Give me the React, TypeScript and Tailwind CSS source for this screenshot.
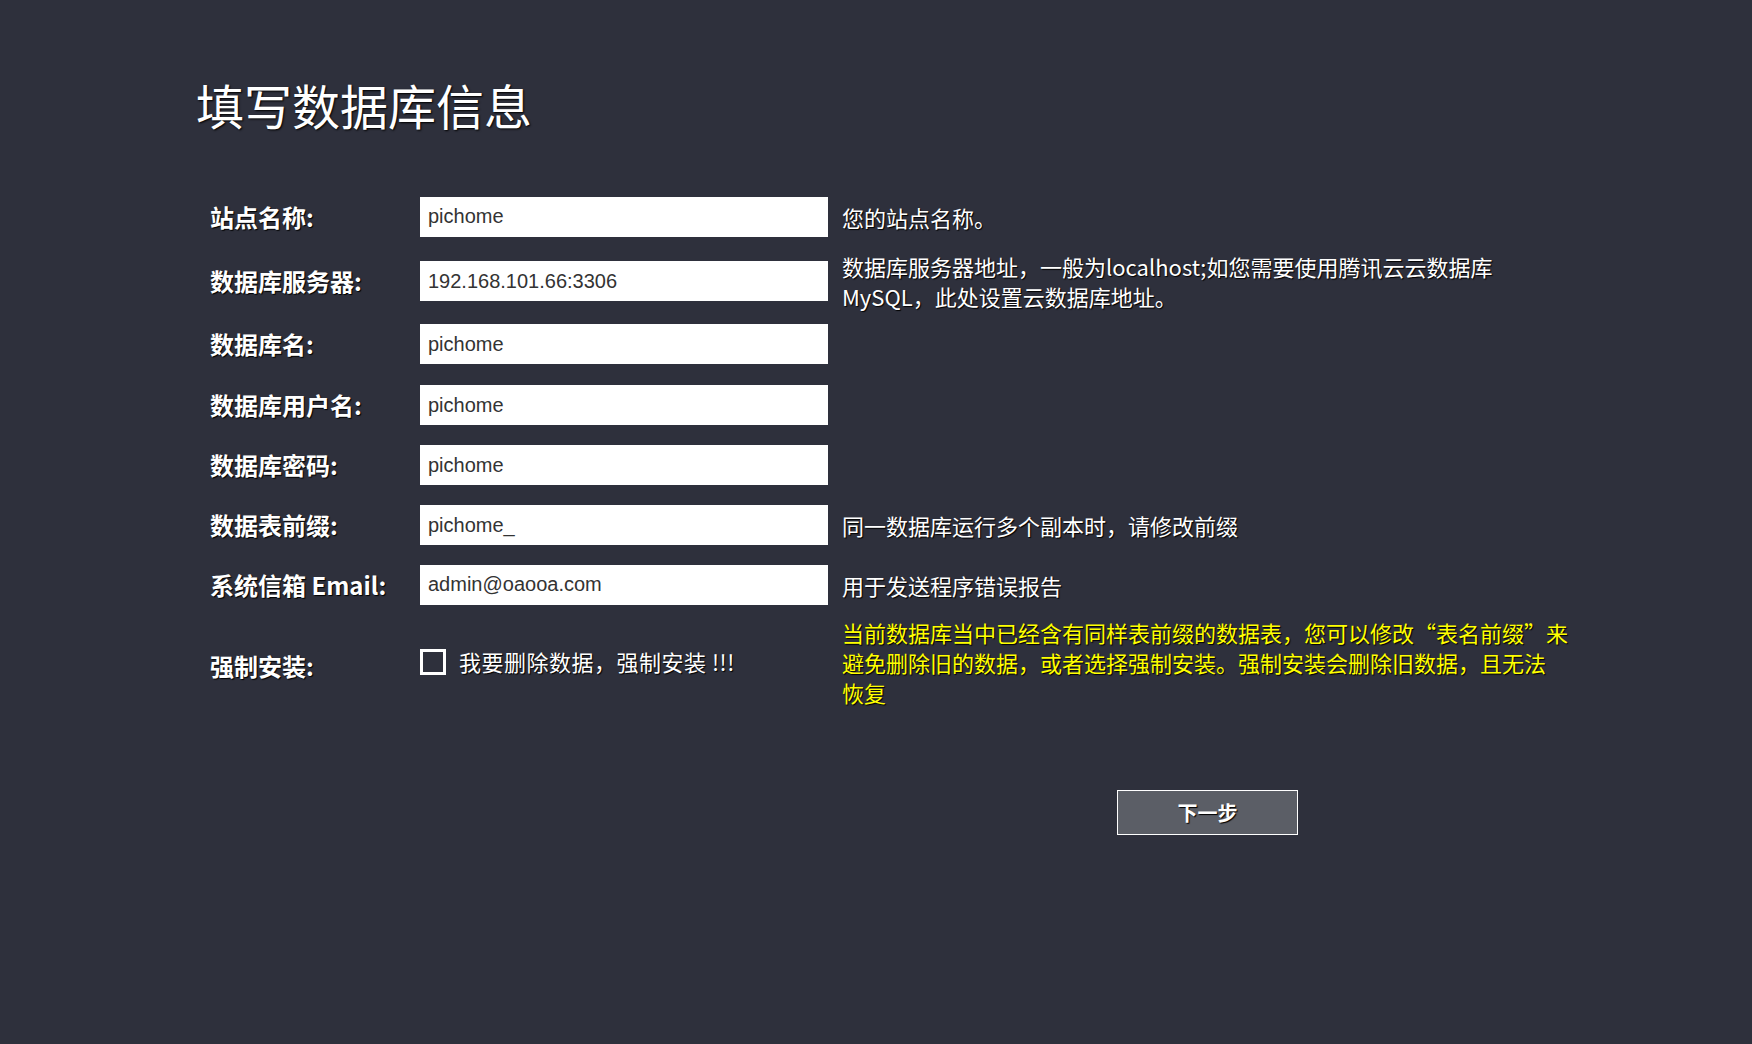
import React from "react";

const cjk = { fontFamily: '"Noto Sans CJK SC", "Noto Sans", sans-serif' };
const arial = { fontFamily: '"Liberation Sans", Arial, sans-serif' };

function Row({
  label,
  value,
  help,
  h,
}: {
  label: string;
  value: string;
  help?: React.ReactNode;
  h: string;
}) {
  return (
    <div className={`flex items-center ${h}`}>
      <div className="w-[210px] shrink-0 text-[24px] font-bold text-white whitespace-nowrap [text-shadow:1px_1px_1px_#000]">
        {label}
      </div>
      <input
        readOnly
        value={value}
        className="w-[408px] h-[40px] shrink-0 bg-white px-[8px] text-[20px] text-[#333] outline-none"
        style={arial}
      />
      {help ? (
        <div className="ml-[14px] text-[22px] leading-[30px] text-white whitespace-nowrap [text-shadow:1px_1px_1px_#000]">
          {help}
        </div>
      ) : null}
    </div>
  );
}

export default function App() {
  return (
    <div className="min-h-[1044px] w-full bg-[#2e303c]" style={cjk}>
      <div className="pl-[196px] pt-[80px]">
        <h1 className="text-[48px] leading-[48px] font-normal text-white [text-shadow:1px_1px_2px_#000]">
          填写数据库信息
        </h1>
      </div>
      <div className="pl-[210px] mt-[56px]">
        <Row h="h-[65px]" label="站点名称:" value="pichome" help="您的站点名称。" />
        <Row
          h="h-[64px]"
          label="数据库服务器:"
          value="192.168.101.66:3306"
          help={
            <>
              数据库服务器地址，一般为localhost;如您需要使用腾讯云云数据库
              <br />
              MySQL，此处设置云数据库地址。
            </>
          }
        />
        <Row h="h-[62px]" label="数据库名:" value="pichome" />
        <Row h="h-[60px]" label="数据库用户名:" value="pichome" />
        <Row h="h-[60px]" label="数据库密码:" value="pichome" />
        <Row h="h-[60px]" label="数据表前缀:" value="pichome_" help="同一数据库运行多个副本时，请修改前缀" />
        <Row h="h-[59px]" label="系统信箱 Email:" value="admin@oaooa.com" help="用于发送程序错误报告" />
        <div className="flex items-center h-[95px]">
          <div className="w-[210px] shrink-0 pt-[8px] text-[24px] font-bold text-white [text-shadow:1px_1px_1px_#000]">
            强制安装:
          </div>
          <div className="w-[408px] shrink-0 flex items-center">
            <span className="w-[26px] h-[26px] border-[3px] border-white bg-[#2e303c] shrink-0" />
            <span className="ml-[13px] text-[22px] tracking-[0.5px] text-white whitespace-nowrap [text-shadow:1px_1px_1px_#000]">
              我要删除数据，强制安装 !!!
            </span>
          </div>
          <div className="ml-[14px] text-[22px] leading-[30px] text-[#ffff00] whitespace-nowrap [text-shadow:1px_1px_1px_#000]">
            当前数据库当中已经含有同样表前缀的数据表，您可以修改“表名前缀”来
            <br />
            避免删除旧的数据，或者选择强制安装。强制安装会删除旧数据，且无法
            <br />
            恢复
          </div>
        </div>
      </div>
      <div className="pl-[1117px] mt-[81px]">
        <button className="w-[181px] h-[45px] bg-[#5b5e66] border border-white text-white text-[20px] font-bold [text-shadow:1px_1px_1px_#000]">
          下一步
        </button>
      </div>
    </div>
  );
}
